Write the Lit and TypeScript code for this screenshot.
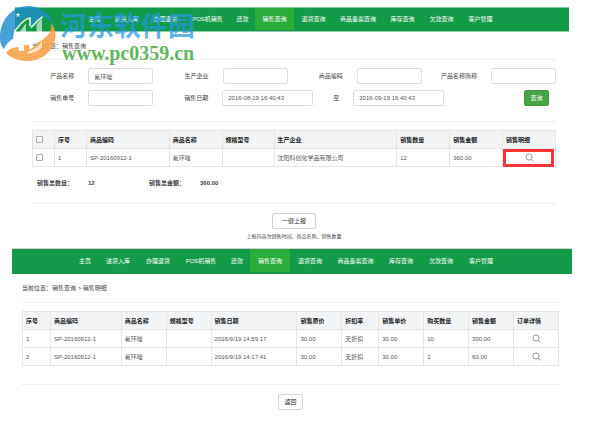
import { LitElement, html, css, svg } from "lit";
import { customElement } from "lit/decorators.js";
import { classMap } from "lit/directives/class-map.js";

const NAV_ITEMS = [
  { text: "主页", size: "s" },
  { text: "进货入库", size: "m" },
  { text: "办理退货", size: "m" },
  { text: "POS机销售", size: "l" },
  { text: "还款", size: "s" },
  { text: "销售查询", size: "m" },
  { text: "退货查询", size: "m" },
  { text: "商品备案查询", size: "xl" },
  { text: "库存查询", size: "m" },
  { text: "欠款查询", size: "m" },
  { text: "客户管理", size: "m" },
];

const SALES_COLS: [string, number][] = [
  ["", 22], ["序号", 32], ["商品编码", 83], ["商品名称", 53], ["规格型号", 52],
  ["生产企业", 123], ["销售数量", 53], ["销售金额", 53], ["销售明细", 53],
];

const DETAIL_COLS: [string, number][] = [
  ["序号", 28], ["商品编码", 71], ["商品名称", 45], ["规格型号", 45], ["销售日期", 86],
  ["销售原价", 45], ["折扣率", 37], ["销售单价", 45], ["购买数量", 45], ["销售金额", 45], ["订单详情", 45],
];

const DETAIL_ROWS = [
  ["1", "SP-20160912-1", "氟环唑", "", "2016/9/19 14:59:17", "30.00", "无折扣", "30.00", "10", "300.00"],
  ["2", "SP-20160912-1", "氟环唑", "", "2016/9/19 14:17:41", "30.00", "无折扣", "30.00", "2", "60.00"],
];

const columns = (cols: [string, number][]) => {
  const total = cols.reduce((sum, c) => sum + c[1], 0);
  return html`<colgroup>${cols.map((c) => html`<col style="width:${(c[1] / total) * 100}%">`)}</colgroup>`;
};

const magnifier = svg`<svg class="lens" viewBox="0 0 18 18" fill="none" stroke="#999" stroke-width="2" aria-hidden="true">
  <circle cx="8" cy="8" r="6.2"/><path d="M12.5 12.5 L16.8 16.8"/></svg>`;

@customElement("app-nav")
export class AppNav extends LitElement {
  static properties = { second: { type: Boolean, reflect: true } };
  static styles = css`
    :host {
      display: block;
      --s: 25px; --m: 39px; --l: 45px; --xl: 50px;
      --start: 67px;
    }
    :host([second]) {
      --s: 26px; --m: 40px; --l: 46px; --xl: 51px;
      --start: 60px;
    }
    .bar {
      display: flex;
      height: 23px;
      padding-left: var(--start);
      background: #149b4a;
      border-top: 1px solid #8ccaa6;
      border-bottom: 1px solid #8ccaa6;
    }
    :host([second]) .bar {
      height: 24px;
      border-top-color: #cfcfcf;
      border-bottom-color: #0d9142;
    }
    .item {
      display: flex;
      align-items: center;
      justify-content: center;
      flex: none;
      margin-bottom: 1px;
      color: #fff;
      font-size: 6px;
      white-space: nowrap;
      text-decoration: none;
    }
    .s { width: var(--s); }
    .m { width: var(--m); }
    .l { width: var(--l); }
    .xl { width: var(--xl); }
    .active { background: #2bad3c; }
  `;
  render() {
    return html`<nav class="bar">
      ${NAV_ITEMS.map((n) => html`<a href="#" class=${classMap({ item: true, [n.size]: true, active: n.text === "销售查询" })}>${n.text}</a>`)}
    </nav>`;
  }
}

@customElement("site-watermark")
export class SiteWatermark extends LitElement {
  static styles = css`
    :host { display: flex; pointer-events: none; }
    .logo { width: 66px; height: 62px; margin-right: -6px; flex: none; }
    .words { padding-top: 3px; white-space: nowrap; }
    .name {
      color: rgba(36, 152, 228, 0.72);
      font: bold 27px/36px "Noto Sans CJK SC", sans-serif;
    }
    .site {
      padding-left: 2px;
      color: rgba(68, 168, 62, 0.85);
      font: bold 20px/20px "Liberation Serif", serif;
    }
  `;
  render() {
    return html`
      <svg class="logo" viewBox="0 0 198 186" aria-hidden="true">
        <path fill="#1e8ccb" fill-opacity=".82" d="M0 104 C-2 50 36 6 84 6 C126 6 160 36 167 78 C160 54 146 40 128 36 L104 56 L100 66 L92 66 L92 40 C82 38 74 40 68 46 L44 78 L40 104 C28 112 16 126 12 136 C4 126 0 116 0 104 Z"/>
        <path fill="#fff" fill-opacity=".75" d="M12 136 C16 122 28 110 40 104 L56 104 L56 128 C40 128 24 138 18 146 Z"/>
        <path fill="none" stroke="#fff" stroke-opacity=".85" stroke-width="5" d="M42 102 L45 80 C58 66 70 44 90 42 L90 66 M92 70 C100 68 104 54 128 38"/>
        <path fill="#fff" fill-opacity=".6" d="M58 84 L78 58 L78 122 L58 128 Z M110 60 L126 42 L126 96 L110 106 Z"/>
        <path fill="#f7a045" fill-opacity=".88" d="M18 146 C30 132 44 128 56 130 L56 140 L72 140 L72 124 L88 122 L88 136 C100 132 108 126 110 118 L126 108 C146 96 156 78 154 58 C164 72 168 88 166 102 C160 142 124 171 84 171 C56 171 32 162 18 146 Z"/>
        <path fill="#fff" fill-opacity=".7" d="M88 140 C108 134 118 126 126 110 L126 130 C114 142 100 148 80 150 Z"/>
        <path fill="#fff" fill-opacity=".85" d="M54 25 l2 5 6 0 -5 4 2 6 -5 -4 -5 4 2 -6 -5 -4 6 0z"/>
      </svg>
      <div class="words">
        <div class="name">河东软件园</div>
        <div class="site">www.pc0359.cn</div>
      </div>`;
  }
}

@customElement("app-root")
export class AppRoot extends LitElement {
  static styles = css`
    :host {
      display: block;
      position: relative;
      padding-top: 7px;
      background: #fff;
      color: #444;
      font: 6px/8px "Liberation Sans", "Noto Sans CJK SC", sans-serif;
    }
    .panel { margin: 0 46px 0 15px; }
    .panel.detail { margin: 8px 43px 0 12px; }
    .body { padding: 0 13px 0 17px; }
    .detail .body { padding: 0 13px 0 10px; }
    .crumb {
      display: flex;
      align-items: center;
      height: 27px;
      border-bottom: 1px solid #eee;
    }
    .detail .crumb { height: 28px; }
    .form {
      display: grid;
      grid-template-columns: repeat(4, 1fr);
      row-gap: 6px;
      margin-left: -13px;
      padding: 8px 0 15px;
    }
    .field { display: flex; align-items: center; justify-content: flex-end; gap: 14px; }
    .range { grid-column: span 3; display: flex; align-items: center; gap: 14px; padding: 0 7px 0 31px; }
    .to { margin-left: 6px; }
    input[type="text"] {
      box-sizing: border-box;
      width: 65px;
      height: 16px;
      margin: 0;
      padding: 0 5px;
      border: 1px solid #ddd;
      border-radius: 2px;
      background: #fff;
      color: #555;
      font: inherit;
      outline: none;
    }
    .range input[type="text"] { width: 91px; }
    button {
      box-sizing: border-box;
      height: 16px;
      padding: 0 5px;
      border: 1px solid #d4d4d4;
      border-radius: 2px;
      background: #fff;
      color: #333;
      font: inherit;
    }
    .search {
      width: 25px;
      margin-left: auto;
      border-color: #3f9c3f;
      background: #47a447;
      color: #fff;
    }
    .report { width: 44px; }
    .back { width: 25px; }
    .rule { border-top: 1px solid #eee; }
    table {
      width: 100%;
      margin-top: 8px;
      table-layout: fixed;
      border-collapse: collapse;
    }
    th, td {
      height: 17px;
      padding: 0 3px;
      border: 1px solid #e4e6e8;
      color: #555;
      text-align: left;
      white-space: nowrap;
      font-weight: normal;
    }
    th { background: #f2f4f6; color: #222; font-weight: bold; }
    .icon { position: relative; text-align: center; }
    .icon a { display: flex; justify-content: center; }
    .lens { display: block; width: 9px; height: 9px; }
    .marker {
      position: absolute;
      inset: 0 1px -1px 0;
      border: 3px solid #f73535;
      pointer-events: none;
    }
    input[type="checkbox"] {
      appearance: none;
      display: block;
      box-sizing: border-box;
      width: 7px;
      height: 7px;
      margin: 0;
      border: 1px solid #aaa;
      border-radius: 1px;
      background: #fff;
    }
    .totals { display: flex; gap: 14px; padding: 12px 0 16px 5px; font-weight: bold; }
    .totals dl { display: flex; gap: 15px; margin: 0; width: 98px; }
    .totals dd { margin: 0; }
    .actions { display: flex; flex-direction: column; align-items: center; gap: 3px; padding-top: 9px; }
    .note { font-size: 5px; }
    .detail .rule { margin-top: 18px; }
    .mark { position: absolute; left: 0; top: 4px; }
  `;
  render() {
    return html`
      <section class="panel">
        <app-nav></app-nav>
        <div class="body">
          <div class="crumb">当前位置：销售查询</div>
          <form class="form" @submit=${(e: Event) => e.preventDefault()}>
            <div class="field"><label for="product">产品名称</label><input id="product" type="text" value="氟环唑"></div>
            <div class="field"><label for="maker">生产企业</label><input id="maker" type="text"></div>
            <div class="field"><label for="code">商品编码</label><input id="code" type="text"></div>
            <div class="field"><label for="abbr">产品名称简称</label><input id="abbr" type="text"></div>
            <div class="field"><label for="order">销售单号</label><input id="order" type="text"></div>
            <div class="range">
              <label for="from">销售日期</label><input id="from" type="text" value="2016-08-19 16:40:43">
              <label class="to" for="until">至</label><input id="until" type="text" value="2016-09-19 16:40:43">
              <button class="search">查询</button>
            </div>
          </form>
          <div class="rule"></div>
          <table>
            ${columns(SALES_COLS)}
            <thead><tr>
              ${SALES_COLS.map(([t], i) => html`<th>${i === 0 ? html`<input type="checkbox" aria-label="全选">` : t}</th>`)}
            </tr></thead>
            <tbody><tr>
              <td><input type="checkbox" aria-label="1"></td>
              <td>1</td><td>SP-20160912-1</td><td>氟环唑</td><td></td><td>沈阳科创化学品有限公司</td><td>12</td><td>360.00</td>
              <td class="icon"><a href="#" aria-label="销售明细">${magnifier}</a><span class="marker"></span></td>
            </tr></tbody>
          </table>
          <div class="totals">
            <dl><dt>销售总数量：</dt><dd>12</dd></dl>
            <dl><dt>销售总金额：</dt><dd>360.00</dd></dl>
          </div>
          <div class="rule"></div>
          <div class="actions">
            <button class="report">一键上报</button>
            <div class="note">上报内容为销售时间、商品名称、销售数量</div>
          </div>
        </div>
      </section>
      <section class="panel detail">
        <app-nav second></app-nav>
        <div class="body">
          <div class="crumb">当前位置：销售查询 &gt; 销售明细</div>
          <table>
            ${columns(DETAIL_COLS)}
            <thead><tr>${DETAIL_COLS.map(([t]) => html`<th>${t}</th>`)}</tr></thead>
            <tbody>
              ${DETAIL_ROWS.map((r) => html`<tr>
                ${r.map((c) => html`<td>${c}</td>`)}
                <td class="icon"><a href="#" aria-label="订单详情">${magnifier}</a></td>
              </tr>`)}
            </tbody>
          </table>
          <div class="rule"></div>
          <div class="actions"><button class="back">返回</button></div>
        </div>
      </section>
      <site-watermark class="mark"></site-watermark>
    `;
  }
}
